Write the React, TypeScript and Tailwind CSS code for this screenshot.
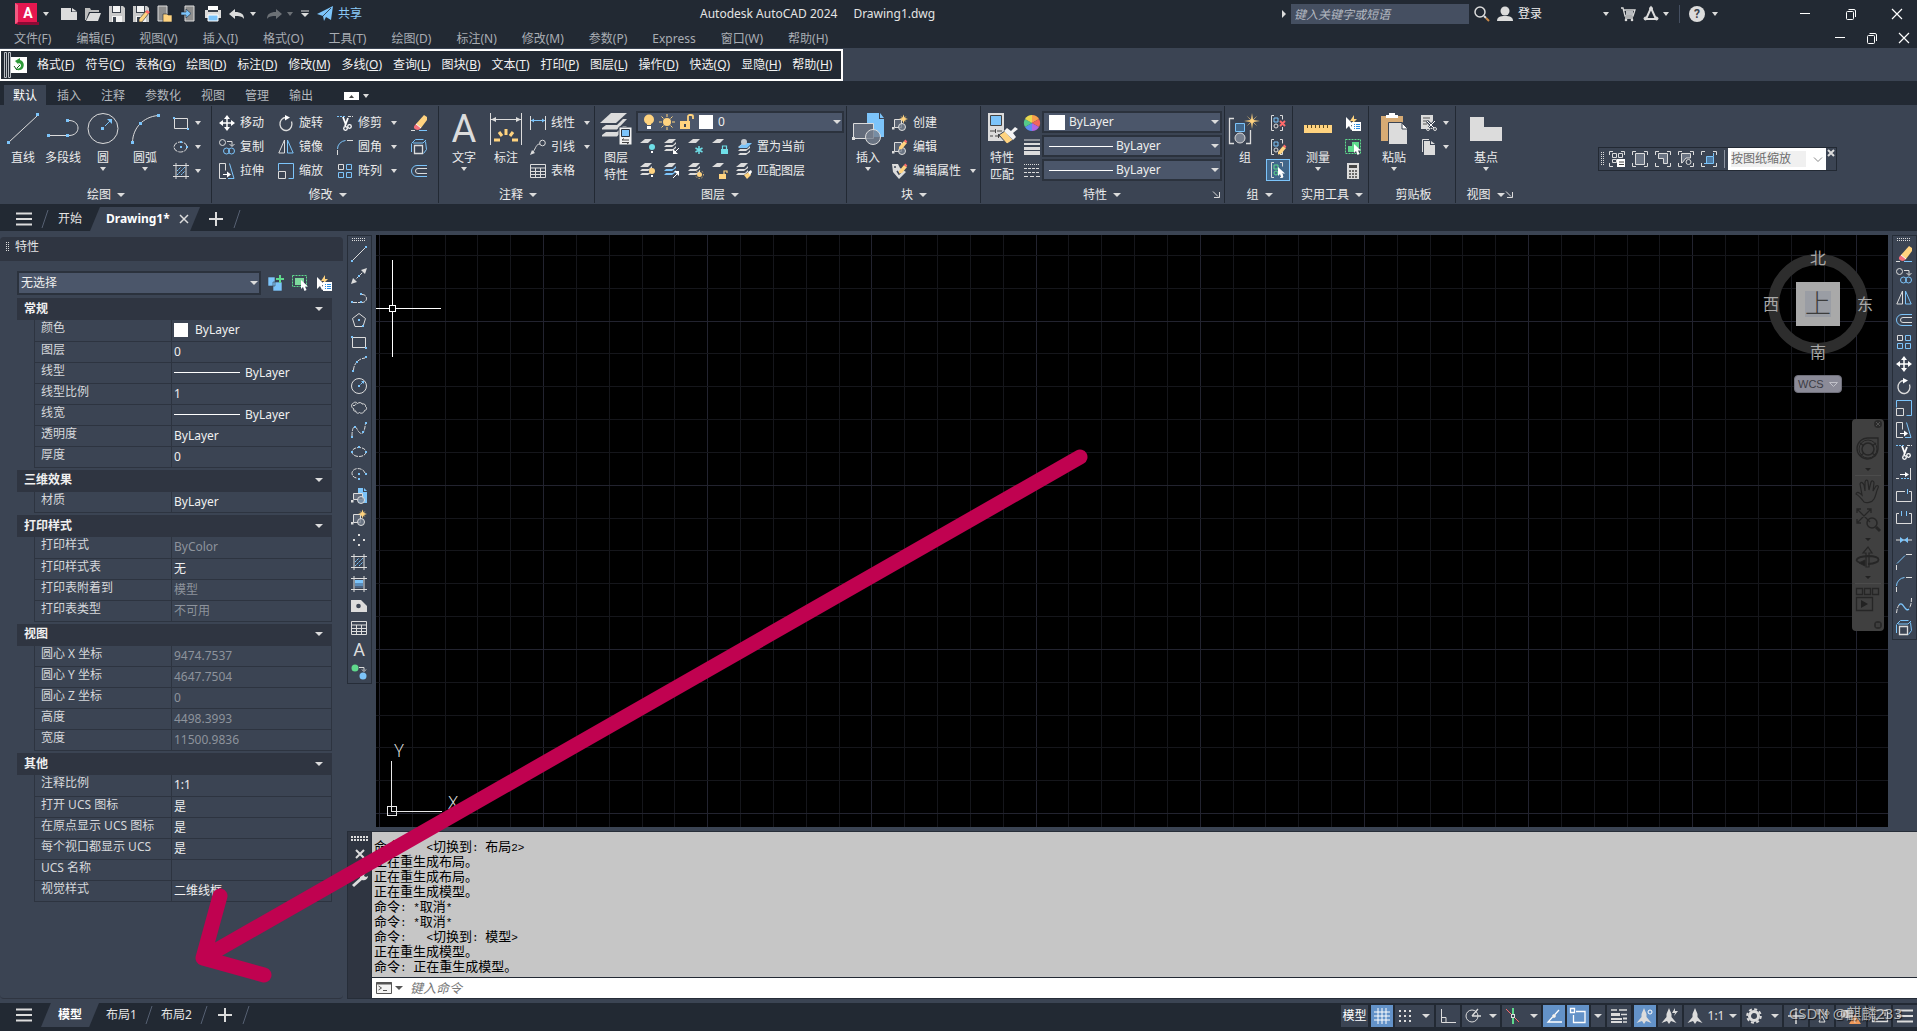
import React from "react";

const W = "#dcdcdc";
const B = "#7cc4fa";
const Y = "#ffd37f";
const T = "#6fdfe8";
const R = "#ff6b6b";
const G = "#5fd98c";
const P = "#3b4453";

type Kids = { children?: React.ReactNode };

function S({ w = 16, h, vb, children }: { w?: number; h?: number; vb?: string } & Kids) {
  const hh = h ?? w;
  return (
    <svg width={w} height={hh} viewBox={vb ?? `0 0 ${w} ${hh}`} fill="none" stroke={W} className="block shrink-0 overflow-visible" aria-hidden="true">
      {children}
    </svg>
  );
}

/* Blue grip marker used on most drawing icons. */
function D({ x, y, s = 2 }: { x: number; y: number; s?: number }) {
  return <rect x={x} y={y} width={s} height={s} fill={B} stroke="none" />;
}

function Arrow() {
  return <S w={6} h={4}><path d="M0 0h6L3 4z" fill={W} stroke="none" /></S>;
}
function BigArrow() {
  return <S w={8} h={4}><path d="M0 0h8L4 4z" fill={W} stroke="none" /></S>;
}

/* Stack of layer sheets; every layer tool adds its own badge to it. */
function Sheets({ n, blue }: { n: number; blue?: boolean }) {
  return (
    <g stroke="none" fill={W}>
      <path d="M5 0h7l-4 4H0z" />
      {n > 1 && <path d="M0 8l2-2h7l3-3v2L8 8z" fill={blue ? B : W} />}
      {n > 2 && <path d="M0 12l2-2h7l3-3v2l-4 3z" fill={blue ? B : W} />}
    </g>
  );
}

const Pencil = () => (
  <g stroke="none">
    <path d="M8 13l5-6 3 2-5 6-3 .6z" fill={Y} />
    <path d="M13 7l1.300-1.600 2 2L15 9z" fill={R} />
  </g>
);
const Star = ({ x, y, r = 4.5 }: { x: number; y: number; r?: number }) => (
  <path
    d={`M${x} ${y - r}L${x + 1} ${y - 1.5}L${x + r * 0.7} ${y - r * 0.7}L${x + 1.5} ${y - 1}L${x + r} ${y}L${x + 1.5} ${y + 1}L${x + r * 0.7} ${y + r * 0.7}L${x + 1} ${y + 1.5}L${x} ${y + r}L${x - 1} ${y + 1.5}L${x - r * 0.7} ${y + r * 0.7}L${x - 1.5} ${y + 1}L${x - r} ${y}L${x - 1.5} ${y - 1}L${x - r * 0.7} ${y - r * 0.7}L${x - 1} ${y - 1.5}z`}
    fill={Y}
    stroke="none"
  />
);
const Cursor = ({ x, y }: { x: number; y: number }) => (
  <path d={`M${x} ${y}v9l2-2 1.500 4 2-1-1.500-3.500h3z`} fill="#fff" stroke="none" />
);

const ic = {
  line: <S><path d="M2 14L14 2" /><D x={0} y={14} /><D x={14} y={0} /></S>,
  xline: <S><path d="M2 14L14 2" strokeDasharray="3 2" /><path d="M0 16l2-6 4 4zM16 0l-6 2 4 4z" fill={W} stroke="none" /><D x={7} y={7} /></S>,
  pline: <S><path d="M2 12.500h7M11 4.500c6 0 6 8 0 8" strokeDasharray="4 1" /><D x={0} y={11} /><D x={9} y={11} /><D x={9} y={3} /></S>,
  polygon: <S><path d="M8 1.500l6.500 5-2.500 8H4l-2.500-8z" /><D x={7} y={7} /><D x={11} y={13} /></S>,
  rect: <S><path d="M1.500 3.500h13v10h-13z" /><D x={0} y={2} /><D x={14} y={13} /></S>,
  arc: <S><path d="M2.500 14C3 7 8 2.500 14 2" strokeDasharray="4 1" /><D x={1} y={14} /><D x={5} y={5} /><D x={14} y={0} /></S>,
  circle: <S><circle cx="8" cy="8" r="7.500" /><D x={7} y={7} /><path d="M9.500 6.500l2.500-2.500" stroke={B} /><path d="M10 3h3v3z" fill={B} stroke="none" /></S>,
  cloud: <S><path d="M3 9C0 8 0 4 2 3.500c1-2 4-1.500 4.500 0C8 2 11 2.500 11 4c2-.5 4 .5 3.500 2.500 2 1 1 4-1 4C13 13 10 14 8.500 12.500 7 14 4.500 13 5 11 3 11.500 2 10.500 3 9zM2 5.500c1.500.500 3-.5 3-2" /></S>,
  spline: <S><path d="M1 14C1 4 4 3 6 7s7 10 8.500-6" strokeDasharray="4 1" /><D x={0} y={14} /><D x={3} y={4} /><D x={11} y={9} /><D x={14} y={0} /></S>,
  ellipse: <S><ellipse cx="8" cy="8" rx="7" ry="4.500" strokeDasharray="4 1" /><D x={0} y={7} /><D x={14} y={7} /><D x={7} y={2} /></S>,
  ellipseC: <S><ellipse cx="7.500" cy="8" rx="6.500" ry="5" strokeDasharray="5 1" /><D x={7} y={7} /><D x={13} y={7} /><D x={7} y={2} /></S>,
  earc: <S><path d="M14 7C12 1 1 1 1 7.500c0 3 3 4.500 5 4.500" strokeDasharray="4 1" /><D x={14} y={7} /><D x={7} y={7} /><D x={7} y={12} /></S>,
  insertS: <S><path d="M7 0h5v4h4v11H7z" fill={B} stroke="none" /><path d="M13 0l3 3h-3z" fill={B} stroke="none" /><path d="M2.500 5.500h9v6h-9z" fill="#636b7a" /><circle cx="10" cy="12" r="3.500" fill="#767f8ecc" /><rect x="0" y="12" width="2.500" height="2.500" fill={W} stroke="none" /></S>,
  create: <S><path d="M2.500 4.500h7v8h-7z" fill="#5a6372" /><circle cx="10" cy="12" r="3.500" fill="#767f8ecc" /><rect x="0" y="12" width="2.500" height="2.500" fill={W} stroke="none" /><Star x={11.5} y={4} /></S>,
  editB: <S><path d="M2.500 3.500h7v9h-7z" fill="#5a6372" /><circle cx="10" cy="12" r="3.500" fill="#767f8ecc" /><rect x="0" y="12" width="2.500" height="2.500" fill={W} stroke="none" /><g transform="translate(-1,-5)"><Pencil /></g></S>,
  editAttr: <S><path d="M0 1h6l2 4 6 4-7 7-6-7z" fill={W} stroke="none" /><circle cx="3" cy="4" r="1" fill={P} stroke="none" /><path d="M5 8l2 3 4-4" stroke={P} strokeWidth="1.500" /><g transform="translate(-1,-5)"><Pencil /></g></S>,
  point: <S><g fill={W} stroke="none"><path d="M7 2h2v2H7zM2 7h2v2H2zM12 7h2v2h-2zM7 12h2v2H7z" /></g></S>,
  hatch: <S><path d="M3 0v16M13 0v16M0 2.500h16M0 13.500h16" /><path d="M4 8l4-4M4 12l8-8M8 12l4-4" stroke={B} strokeDasharray="2 .5" /></S>,
  gradient: <S><path d="M3 0v16M13 0v16M0 2.500h16M0 13.500h16" /><path d="M4 4h8v3H4z" fill={B} stroke="none" /><path d="M4 7h8v3H4z" fill="#5b8dba" stroke="none" /><path d="M4 10h8v2H4z" fill="#4a6280" stroke="none" /></S>,
  region: <S><path d="M0 2h10l6 6v6H0z" fill={W} stroke="none" /><circle cx="7.500" cy="8" r="2.300" fill={P} stroke="none" /></S>,
  table: <S><path d="M.5 1.500h15v13H.5zM.5 5h15M.5 8.500h15M.5 11.500h15M5.500 5v9M10.500 5v9" /></S>,
  text: <S><text x="8" y="14" textAnchor="middle" fontSize="18" fontFamily="Roboto" fill={W} stroke="none">A</text></S>,
  addsel: <S><circle cx="4" cy="4" r="3.500" fill={G} stroke="none" /><circle cx="12" cy="12" r="3.500" fill={B} stroke="none" /><path d="M8 3.500h5V6M11 5.500l2 2 2-2" /></S>,
  erase: <S><path d="M5 9L13 0l3 2v3l-6 8z" fill={Y} stroke="none" /><path d="M5 9l5 4c-2 3-6 2-7 0-.5-2 1-3 2-4z" fill="#f4707a" stroke="none" /><path d="M5 9l5 4" stroke="#fff" /><path d="M0 15.500h4" /><path d="M8 15.500h8" stroke={B} /></S>,
  copy: <S><circle cx="3.500" cy="3.500" r="3" /><path d="M8 2.500h5V7M10.500 5l2.500 2.500L15.500 5" /><circle cx="7.500" cy="12" r="3" stroke={B} /><circle cx="12.500" cy="12" r="3" stroke={B} /></S>,
  mirror: <S><path d="M6.500 1v13H.8z" /><path d="M9.500 1v13h5.700z" stroke={B} /></S>,
  offset: <S><path d="M16 2.500H6a5.500 5.500 0 000 11h10" stroke={B} /><path d="M16 5.500H7a2.500 2.500 0 000 5h9" /></S>,
  array: <S><path d="M1.500 1.500h5v5h-5z" /><path d="M9.500 1.500h5v5h-5zM1.500 9.500h5v5h-5zM9.500 9.500h5v5h-5z" stroke={B} /></S>,
  move: <S><path d="M8 2v12M2 8h12" stroke="#fff" strokeWidth="1.500" /><path d="M8 0l3 4H5zM8 16l3-4H5zM0 8l4-3v6zM16 8l-4-3v6z" fill="#fff" stroke="none" /></S>,
  rotate: <S><path d="M8 2.500a6 6.500 0 105.500 4" strokeWidth="1.300" /><path d="M7 0l5 2.500L7 5.500z" fill="#fff" stroke="none" /></S>,
  scale: <S><path d="M.5 7.500V.5h15v15h-5" stroke={B} /><path d="M.5 8.500h7v7h-7z" /></S>,
  stretch: <S><path d="M7 15.500H.5V.5h6v7" /><path d="M10.500.5l4.500 15H9" stroke={B} /><path d="M4 11.500h5" stroke="#fff" /><path d="M8 8.500l4 3-4 3z" fill="#fff" stroke="none" /></S>,
  trim: <S><path d="M0 1.500h9" stroke={B} strokeDasharray="2 1" /><path d="M11 1.500h5" strokeDasharray="3 1" /><path d="M6 2l3 8M11 3L8 11" stroke="#fff" strokeWidth="1.800" /><circle cx="8.500" cy="13.500" r="1.800" stroke="#fff" strokeWidth="1.300" /><circle cx="12.500" cy="11.500" r="1.800" stroke="#fff" strokeWidth="1.300" /></S>,
  extend: <S><path d="M14.500 2v12" /><path d="M0 12.500h3" /><path d="M5 12.500h8" stroke={B} strokeDasharray="2 1" /><path d="M4 8.500h6" stroke="#fff" /><path d="M9 6l4 2.500L9 11z" fill="#fff" stroke="none" /></S>,
  breakPt: <S><path d="M9 3.500H.5v10h15v-10H13" /><path d="M11.500 1v5" stroke={B} /></S>,
  brk: <S><path d="M3 3.500H.5v10h15v-10H13" /><path d="M5.500 1v5M10.500 1v5" stroke={B} /></S>,
  join: <S><path d="M0 8h16" /><path d="M4 5l4 3-4 3zM12 5L8 8l4 3z" fill={B} stroke="none" /></S>,
  chamfer: <S><path d="M.5 16v-5M10 .5h6" /><path d="M1 9.500L9 1.500" stroke={B} /></S>,
  fillet: <S><path d="M.5 16v-5M10 1.500h6" /><path d="M.5 10a9 8.500 0 018-8.500" stroke={B} /></S>,
  blend: <S><path d="M.5 15C1 12 1 10 3 7M15.500 0c0 4-.5 7-2 10" strokeDasharray="4 1" /><path d="M3 7c4-5 6 8 10 4" stroke={B} strokeWidth="1.300" /></S>,
  explode: <S><path d="M3.500 6.500h8v8h-8z" strokeWidth="1.300" /><path d="M.5 4.500l4-4h8M14.500 2.500l1 8-3 4M.5 5v8M2 4h10l3-3" stroke={B} /></S>,
  dimlin: <S><path d="M.5 1v14M15.500 1v14" /><path d="M1 5.500h14" stroke={B} /><path d="M1 5.500l3-2v4zM15 5.500l-3-2v4z" fill={B} stroke="none" /></S>,
  leader: <S><circle cx="12.500" cy="4" r="2.800" /><path d="M10 5C6 5 6 9 3 13" /><path d="M0 16l2-5 3 3z" fill={W} stroke="none" /></S>,
};

const bulb = (x: number, y: number, c: string) => (
  <g stroke="none"><circle cx={x} cy={y} r="3" fill={c} /><path d={`M${x - 1} ${y + 4}h2v2h-2z`} fill="#fff" /></g>
);
const lock = (x: number, y: number, c: string, open?: boolean) => (
  <g><path d={`M${x} ${y}h7v5h-7z`} fill={c} stroke="none" /><path d={open ? `M${x + 5} ${y}v-3h3v2` : `M${x + 1.5} ${y}v-3h4v3`} stroke={c} strokeWidth="1.200" /></g>
);
const layerOff = <S><Sheets n={1} />{bulb(12, 8, T)}</S>;
const layerIso = <S><Sheets n={3} /><path d="M15 9l-4 4" stroke="#fff" /><path d="M9 15v-5l5 5z" fill="#fff" stroke="none" /></S>;
const layerFrz = <S><Sheets n={1} /><path d="M11 7v8M7.500 9l7 4M14.500 9l-7 4" stroke={T} strokeWidth="1.500" /></S>;
const layerLock = <S><Sheets n={1} />{lock(9, 10, T)}</S>;
const layerCur = <S><g transform="translate(2,4)"><Sheets n={3} /></g><path d="M7 4h9l-5 5H2z" fill={B} stroke="none" /><circle cx="8" cy="3" r="3" fill="#c4c8ce" stroke="none" /></S>;
const layerOn = <S><Sheets n={3} />{bulb(12, 8, Y)}</S>;
const layerUniso = <S><Sheets n={3} blue /><path d="M9 15l4-4" stroke="#fff" /><path d="M15 8v5l-5-5z" fill="#fff" stroke="none" /></S>;
const layerThaw = <S><Sheets n={3} /><circle cx="11.500" cy="11.500" r="2.500" fill={Y} stroke="none" /><circle cx="11.500" cy="11.500" r="4" stroke={Y} strokeDasharray="1 2" /></S>;
const layerUnlock = <S><Sheets n={1} />{lock(7, 11, Y, true)}</S>;
const layerMatch = <S><Sheets n={3} /><path d="M8 12l5-3 2 3-4 4z" fill={Y} stroke="none" /><path d="M12 9l3-2 1 2-2 3z" fill="#fff" stroke="none" /></S>;

const quickSel = <S><path d="M1 2v12l3-3 2 4 2-1-2-4h3z" fill="#fff" stroke="none" /><path d="M9 0L5 6h3l-1 3 5-5H9z" fill={Y} stroke="none" /><path d="M7 7h9v9H7z" fill="#fff" stroke="none" /><path d="M9 9.500h1M11 9.500h4M9 11.500h1M11 11.500h4M9 13.500h1M11 13.500h4" stroke="#2c8de0" /></S>;
const selObj = <S><path d="M.5 .5h14v11H.5z" stroke={G} strokeDasharray="2 1" /><path d="M3 3h9v7H3z" fill="#7ed89d" stroke="none" /><Cursor x={9} y={5} /></S>;
const selAll = <S><path d="M.5 .5h15v14H.5z" stroke={G} strokeDasharray="2 1" /><path d="M3 7h4V3h7v6H9v4H3z" fill={G} stroke="none" /><Cursor x={9} y={5} /></S>;
const pickAdd = <S><path d="M0 2h7v9H0zM5 7h9v9H5z" fill={B} stroke={P} strokeWidth=".6" /><path d="M12 0v8M8 4h8" stroke={G} strokeWidth="2" /></S>;

function Item({ icon, label, arrow, cls = "" }: { icon: React.ReactNode; label?: string; arrow?: boolean; cls?: string }) {
  return (
    <button type="button" className={`flex h-6 items-center gap-[5px] whitespace-nowrap ${cls}`} aria-label={label ?? "工具"}>
      {icon}
      {label && <span>{label}</span>}
      {arrow && <span className={label ? "ml-[4px]" : "ml-px"}><Arrow /></span>}
    </button>
  );
}

function Big({ icon, label, label2, arrow, cls }: { icon: React.ReactNode; label: string; label2?: string; arrow?: boolean; cls: string }) {
  return (
    <button type="button" className={`flex flex-col items-center pt-[2px] leading-[17px] ${cls}`}>
      {icon}
      <span className="mt-[4px]">{label}</span>
      {label2 && <span>{label2}</span>}
      {arrow && <span className="mt-px"><Arrow /></span>}
    </button>
  );
}

function Panel({ title, cls, noArrow, launcher, children }: { title: string; cls: string; noArrow?: boolean; launcher?: boolean } & Kids) {
  return (
    <section className={`my-px flex shrink-0 flex-col border-[#222933] pt-[5px] ${cls}`}>
      <div className="flex h-[72px]">{children}</div>
      <div className="flex h-[20px] items-center pt-[3px]">
        <span className="flex-1" />
        <button type="button" className="flex items-center gap-[6px]">{title}{!noArrow && <BigArrow />}</button>
        <span className="flex flex-1 justify-end pr-[2px]">
          {launcher && <S w={7} h={7}><path d="M0 .5l5 5M6.500 1v5.500H1" /></S>}
        </span>
      </div>
    </section>
  );
}

function Combo({ label, value, pre, cls }: { label: string; value: string; pre?: React.ReactNode; cls: string }) {
  return (
    <div className={`flex items-center border-2 border-[#2b323d] bg-[#4b566a] pr-px ${cls}`}>
      {pre}
      <select aria-label={label} className="h-full min-w-0 flex-1 appearance-none bg-transparent text-[#eee] outline-none">
        <option>{value}</option>
      </select>
      <span className="pointer-events-none"><BigArrow /></span>
    </div>
  );
}

const menus = ["文件(F)", "编辑(E)", "视图(V)", "插入(I)", "格式(O)", "工具(T)", "绘图(D)", "标注(N)", "修改(M)", "参数(P)", "Express", "窗口(W)", "帮助(H)"];
const plug = ["格式F", "符号C", "表格G", "绘图D", "标注D", "修改M", "多线O", "查询L", "图块B", "文本T", "打印P", "图层L", "操作D", "快选Q", "显隐H", "帮助H"];

const Min = () => <S w={10} h={12}><path d="M0 5.500h10" stroke="#fff" /></S>;
const Restore = () => <S w={10} h={12}><rect x=".5" y="3.500" width="7" height="8" rx="1" stroke="#fff" /><path d="M2.500 1.500h5.500a1.500 1.500 0 011.500 1.500v6" stroke="#fff" /></S>;
const Close = () => <S w={10} h={12}><path d="M0 1l10 10M10 1L0 11" stroke="#fff" strokeWidth="1.200" /></S>;

function WinButtons({ cls }: { cls: string }) {
  return (
    <div className={`flex items-center ${cls}`}>
      <button type="button" aria-label="最小化"><Min /></button>
      <button type="button" aria-label="还原"><Restore /></button>
      <button type="button" aria-label="关闭"><Close /></button>
    </div>
  );
}

const floppy = (
  <g stroke="none"><path d="M0 0h14l2 2v14H0z" fill="#c9c9c9" /><path d="M3 0h9v7H3z" fill="#3a414c" /><path d="M4 0h7v6H4z" fill="#f4f4f4" /><path d="M3 10h10v6H3z" fill="#f4f4f4" /><path d="M4 11h3v5H4z" fill="#3a414c" /></g>
);
const quick: [string, React.ReactNode][] = [
  ["新建", <S><path d="M0 2h10v4h6v8H0zM11 2l5 3.500h-5z" fill={W} stroke="none" /></S>],
  ["打开", <S><path d="M0 14V2h5l1 2h8v2H4L1 14z" fill="#bdbdbd" stroke="none" /><path d="M5 7h11l-3 8H1z" fill={W} stroke="none" /></S>],
  ["保存", <S>{floppy}</S>],
  ["另存为", <S>{floppy}<path d="M6 13l7-8 3 2-7 9H6z" fill={Y} stroke="#222933" strokeWidth=".6" /><path d="M12 6l2-2 3 2-2 2z" fill={R} stroke="none" /></S>],
  ["从移动设备打开", <S><path d="M1 0h9v15H1z" fill="#8d8d8d" stroke={W} /><path d="M6 8h4l1 1h4v7H6z" fill={Y} stroke="#222933" strokeWidth=".6" /></S>],
  ["保存到移动设备", <S><path d="M4 0h9v15H4z" fill="#8d8d8d" stroke={W} /><path d="M0 6h5V3l5 4.500L5 12V9H0z" fill={B} stroke="#222933" strokeWidth=".6" /></S>],
  ["打印", <S><path d="M3 0h10v5H3z" fill="#fff" stroke="none" /><path d="M0 4h16v8H0z" fill={W} stroke="none" /><path d="M3 4h10v2H3z" fill="#3a414c" stroke="none" /><path d="M3 9h10v6H3z" fill={B} stroke="#fff" /></S>],
];

function TitleBar() {
  return (
    <header className="flex h-[28px] shrink-0 items-center pl-[15px]">
      <div className="flex w-[685px] shrink-0 items-center">
        <button type="button" aria-label="应用程序菜单" className="mr-[4px] flex items-center gap-[4px]">
          <S w={24} h={22}>
            <path d="M0 0h22v21H0z" fill="#e5174f" stroke="none" /><path d="M0 0l3 2v17l-3 2z" fill="#f25a82" stroke="none" /><path d="M3 19h21v3H2z" fill="#8c0a35" stroke="none" />
            <text x="13" y="15" textAnchor="middle" fontSize="14" fontWeight="700" fontFamily="Roboto" fill="#fff" stroke="none">A</text>
          </S>
          <Arrow />
        </button>
        <div className="ml-2 flex gap-2">
          {quick.map(([l, i]) => <button type="button" key={l} aria-label={l}>{i}</button>)}
          <button type="button" aria-label="放弃" className="flex items-center gap-[5px]"><S><path d="M0 8l6-5v3c6 0 9 2 9 7-2-3-5-3-9-3v3z" fill={W} stroke="none" /></S><Arrow /></button>
          <button type="button" aria-label="重做" className="ml-[2px] flex items-center gap-[5px] opacity-40"><S><path d="M16 8l-6-5v3C4 6 1 8 1 13c2-3 5-3 9-3v3z" fill={W} stroke="none" /></S><Arrow /></button>
          <button type="button" aria-label="自定义快速访问"><S w={8} h={8}><path d="M0 1h8" /><path d="M0 3h8L4 7z" fill={W} stroke="none" /></S></button>
          <button type="button" className="flex items-center gap-[5px] text-[#8ccbf8]"><S><path d="M0 8L16 0l-2 14-5-3-2 4-1-5z" fill={B} stroke="none" /><path d="M6 10L14 2" stroke="#222933" strokeWidth=".8" /></S>共享</button>
        </div>
      </div>
      <h1 className="flex shrink-0 gap-4 text-[#e4e4e4]"><span>Autodesk AutoCAD 2024</span><span>Drawing1.dwg</span></h1>
      <div className="flex flex-1 items-center justify-end pr-[15px]">
        <S w={4} h={8}><path d="M0 0l4 4-4 4z" fill={W} stroke="none" /></S>
        <input aria-label="搜索" placeholder="键入关键字或短语" className="ml-[5px] h-[20px] w-[178px] bg-[#454f61] px-[3px] italic placeholder:text-[#b4b9c1]" />
        <button type="button" aria-label="搜索" className="ml-[5px]"><S><circle cx="6" cy="6" r="5" strokeWidth="1.500" /><path d="M10 10l2 2" strokeWidth="2" /><path d="M12 12l3 3" stroke="#c98a4a" strokeWidth="2" /></S></button>
        <button type="button" className="ml-[7px] flex items-center gap-[5px] text-[#eee]"><S><circle cx="8" cy="5" r="4.500" fill={W} stroke="none" /><path d="M0 15c0-4 3-5 8-5s8 1 8 5z" fill={W} stroke="none" /></S>登录</button>
        <span className="ml-[61px]"><Arrow /></span>
        <button type="button" aria-label="购物车" className="ml-[12px]"><S w={14} h={16}><path d="M0 2h2l2 8h8l2-6H3M4 12h8" strokeWidth="1.300" /><path d="M5 5h7v4H5z" fill="#b9bcc0" stroke="none" /><circle cx="5" cy="14" r="1.300" fill={W} stroke="none" /><circle cx="11" cy="14" r="1.300" fill={W} stroke="none" /></S></button>
        <button type="button" aria-label="Autodesk App" className="ml-[8px] flex items-center gap-[4px]"><S><path d="M8 2L3 13h10z" strokeWidth="2" /><circle cx="8" cy="2.500" r="1.500" fill={W} /><circle cx="2.500" cy="12.500" r="1.500" fill={W} /><circle cx="13.500" cy="12.500" r="1.500" fill={W} /></S><Arrow /></button>
        <span className="ml-[10px] h-[18px] w-px bg-[#454f61]" />
        <button type="button" aria-label="帮助" className="ml-[9px] flex items-center gap-[7px]"><S><circle cx="8" cy="8" r="8" fill={W} stroke="none" /><text x="8" y="12" textAnchor="middle" fontSize="12" fontWeight="700" fontFamily="Roboto" fill="#3a414c" stroke="none">?</text></S><Arrow /></button>
        <WinButtons cls="ml-[82px] gap-[36px]" />
      </div>
    </header>
  );
}

const bulbOn = <S w={12} h={16}><circle cx="6" cy="5.500" r="5" fill={Y} stroke="none" /><path d="M4 10h4v1H4z" fill={Y} stroke="none" /><path d="M4 12h4v3H4z" fill="#fff" stroke="none" /></S>;
const sunOn = <S><circle cx="8" cy="8" r="4" fill={Y} stroke="none" /><path d="M8 0v3M8 13v3M0 8h3M13 8h3M2.500 2.500l2 2M11.500 11.500l2 2M13.500 2.500l-2 2M4.500 11.500l-2 2" stroke={Y} /></S>;
const lockOpen = <S><path d="M1 7h10v8H1z" fill={Y} stroke="none" /><path d="M9 7V2.500Q9 1 11 1h1q2 0 2 1.500V5" stroke={Y} strokeWidth="1.800" /><path d="M5 10h2v3H5z" fill={P} stroke="none" /></S>;
const longLine = <span className="mr-[3px] h-px w-[64px] shrink-0 bg-white" />;
const groupSm = (extra: React.ReactNode, c = B) => (
  <S><path d="M4 .5H1.500v15H4M10 .5h2.500v4M12.500 12v3.500H10" /><path d="M4 3h4v4H4z" stroke={c} /><circle cx="6" cy="11" r="2" stroke={c === B ? W : c} />{extra}</S>
);

function Ribbon() {
  return (
    <div className="flex h-[99px] shrink-0 overflow-hidden bg-[#3b4453] text-[#ececec]">
      <Panel title="绘图" cls="w-[212px] border-r pl-[3px]">
        <Big cls="w-[40px]" label="直线" icon={<S w={32}><path d="M2 29L30 3" /><D x={0} y={28} s={3} /><D x={29} y={0} s={3} /></S>} />
        <Big cls="w-[40px]" label="多段线" icon={<S w={32}><path d="M1 22.500h20M22 7.500c12 0 12 15 0 15" /><D x={0} y={21} s={3} /><D x={19} y={21} s={3} /><D x={19} y={6} s={3} /></S>} />
        <Big cls="w-[40px]" label="圆" arrow icon={<S w={32}><circle cx="16" cy="15.500" r="15" /><D x={14} y={14} s={3} /><path d="M18 13l5-5" stroke={B} /><path d="M20 6h5v5z" fill={B} stroke="none" /></S>} />
        <Big cls="w-[44px]" label="圆弧" arrow icon={<S w={32}><path d="M3.500 29C4 15 14 4 29 2.500" /><D x={2} y={28} s={3} /><D x={10} y={9} s={3} /><D x={28} y={1} s={3} /></S>} />
        <div className="ml-[6px]">
          <Item icon={ic.rect} arrow /><Item icon={ic.ellipseC} arrow /><Item icon={ic.hatch} arrow />
        </div>
      </Panel>
      <Panel title="修改" cls="w-[227px] border-r pl-[7px]">
        <div className="w-[59px]"><Item icon={ic.move} label="移动" /><Item icon={ic.copy} label="复制" /><Item icon={ic.stretch} label="拉伸" /></div>
        <div className="w-[59px]"><Item icon={ic.rotate} label="旋转" /><Item icon={ic.mirror} label="镜像" /><Item icon={ic.scale} label="缩放" /></div>
        <div className="w-[74px]"><Item icon={ic.trim} label="修剪" arrow /><Item icon={ic.fillet} label="圆角" arrow /><Item icon={ic.array} label="阵列" arrow /></div>
        <div><Item icon={ic.erase} /><Item icon={ic.explode} /><Item icon={ic.offset} /></div>
      </Panel>
      <Panel title="注释" cls="w-[156px] border-r pl-[5px]">
        <Big cls="w-[40px]" label="文字" arrow icon={<S w={32}><text x="16" y="29" textAnchor="middle" fontSize="38" fontFamily="Roboto" fill={W} stroke="none">A</text></S>} />
        <Big cls="w-[44px]" label="标注" icon={<S w={32}><path d="M.5 0v32M31.500 0v32M1 6.500h30" /><path d="M1 6.500l5-2.500v5zM31 6.500l-5-2.500v5z" fill={W} stroke="none" /><path d="M16 16v6M9 19l3 4M23 19l-3 4M4 27h6M28 27h-6" stroke={Y} strokeWidth="3" /></S>} />
        <div className="ml-[2px]"><Item icon={ic.dimlin} label="线性" arrow /><Item icon={ic.leader} label="引线" arrow /><Item icon={ic.table} label="表格" /></div>
      </Panel>
      <Panel title="图层" cls="w-[252px] border-r pl-[3px] pr-[2px]">
        <Big cls="w-[36px]" label="图层" label2="特性" icon={<S w={32}><g fill={W} stroke="none"><path d="M11 0h16L16 10H0z" /><path d="M2 15l4-3h11l6-6h4L17 16.500H2zM2 22l4-3h11l6-6h4L17 23.500H2z" /></g><path d="M19 14h13v18H19z" fill="#f1f1f1" stroke={P} /><path d="M21.500 16.500h8v7h-8z" fill={B} stroke="#2b323d" /><path d="M22 27h7M22 29.500h7M24 25.500l-2 1.500M27 31l2-1.500" stroke="#444" /></S>} />
        <div className="min-w-0 flex-1 pl-[2px]">
          <Combo label="图层" value="0" cls="h-[22px] pl-[5px]" pre={<span className="mr-[5px] flex items-center gap-[4px]">{bulbOn}{sunOn}{lockOpen}<span className="h-[14px] w-[14px] bg-white" /></span>} />
          <div className="mt-[2px] flex gap-2 pl-[4px]">{[layerOff, layerIso, layerFrz, layerLock].map((x, i) => <Item key={i} icon={x} />)}<Item icon={layerCur} label="置为当前" /></div>
          <div className="flex gap-2 pl-[4px]">{[layerOn, layerUniso, layerThaw, layerUnlock].map((x, i) => <Item key={i} icon={x} />)}<Item icon={layerMatch} label="匹配图层" /></div>
        </div>
      </Panel>
      <Panel title="块" cls="w-[134px] border-r pl-[3px]">
        <Big cls="w-[36px]" label="插入" arrow icon={<S w={32}><path d="M15 0h12v6h5v18H15z" fill={B} stroke="none" /><path d="M28 0l4 5h-4z" fill={B} stroke="none" /><path d="M1.500 10.500h20v15h-20z" fill="#636b7a" /><circle cx="21" cy="24" r="7.500" fill="#767f8ecc" /><rect x="0" y="24" width="3" height="3" fill={W} stroke="none" /></S>} />
        <div className="ml-[6px]"><Item icon={ic.create} label="创建" /><Item icon={ic.editB} label="编辑" /><Item icon={ic.editAttr} label="编辑属性" arrow /></div>
      </Panel>
      <Panel title="特性" cls="w-[244px] border-r pl-[3px] pr-[2px]" launcher>
        <Big cls="w-[36px]" label="特性" label2="匹配" icon={<S w={32}><path d="M2 0h16v28H2z" fill={W} stroke="none" /><path d="M4.500 2.500h11v10h-11z" fill={B} stroke="#444" /><path d="M4 18h5M11 18h5M4 23h3M9 23h5M9.500 16v4M12.500 21v4" stroke="#444" /><path d="M13 22l8 9 6-4-8-9z" fill={Y} stroke="#3b4453" /><path d="M18 18l9 9 3-3-3-4 5-4-3-2-4 4-4-3z" fill="#f4f4f4" stroke="none" /></S>} />
        <div className="ml-[4px] w-[18px]">
          <Item icon={<S><g stroke="none"><path d="M8 8V0a8 8 0 017 4z" fill="#f7a04b" /><path d="M8 8l7-4a8 8 0 010 8z" fill="#f2655c" /><path d="M8 8l7 4a8 8 0 01-7 4z" fill="#b065e0" /><path d="M8 8v8a8 8 0 01-7-4z" fill="#5b8df0" /><path d="M8 8l-7 4a8 8 0 010-8z" fill="#54c98a" /><path d="M8 8L1 4a8 8 0 017-4z" fill="#e9d94f" /></g></S>} />
          <Item icon={<S><path d="M0 1h16" /><path d="M0 5h16" strokeWidth="2" /><path d="M0 9.500h16" strokeWidth="3" /><path d="M0 14h16" strokeWidth="4" /></S>} />
          <Item icon={<S><path d="M0 1.500h16" strokeDasharray="1 1" /><path d="M0 5.500h16M0 9.500h16" strokeDasharray="3 1" /><path d="M0 13.500h16" strokeDasharray="4 2" /></S>} />
        </div>
        <div className="flex min-w-0 flex-1 flex-col gap-[2px]">
          <Combo label="对象颜色" value="ByLayer" cls="h-[22px] pl-[5px]" pre={<span className="mr-[4px] h-[15px] w-[16px] bg-white" />} />
          <Combo label="线宽" value="ByLayer" cls="h-[22px] pl-[5px]" pre={longLine} />
          <Combo label="线型" value="ByLayer" cls="h-[22px] pl-[5px]" pre={longLine} />
        </div>
      </Panel>
      <Panel title="组" cls="w-[68px] border-r pl-[4px]">
        <Big cls="w-[32px]" label="组" icon={<S w={32}><path d="M5 5.500H.5v25H5M17 30.500h4.500V17" strokeWidth="1.300" /><path d="M6.500 10.500h9v8h-9z" fill="#42678a" stroke={B} /><circle cx="11" cy="25" r="5" fill="#767f8e" /><Star x={23} y={8} r={8} /></S>} />
        <div className="ml-[5px] flex flex-col">
          <Item cls="pl-[4px]" icon={groupSm(<path d="M10 6l5 5M15 6l-5 5" stroke={R} strokeWidth="2" />)} />
          <Item cls="pl-[4px]" icon={groupSm(<Pencil />)} />
          <button type="button" aria-label="组选择" aria-pressed="true" className="flex h-[22px] w-[24px] items-center justify-center border border-[#7cc4fa] bg-[#42678a]">{groupSm(<Cursor x={8} y={5} />, G)}</button>
        </div>
      </Panel>
      <Panel title="实用工具" cls="w-[76px] border-r pl-[5px]">
        <Big cls="w-[40px]" label="测量" arrow icon={<S w={32}><path d="M2 12h28v8H2z" fill={Y} stroke="none" /><path d="M5.500 12v3M9.500 12v3M13.500 12v3M17.500 12v3M21.500 12v3M25.500 12v3" stroke="#5b4a20" /></S>} />
        <div className="ml-[7px]">
          <Item icon={quickSel} /><Item icon={selAll} />
          <Item icon={<S><path d="M2 0h12v16H2z" fill={W} stroke="none" /><path d="M4 2h8v3H4z" fill="#444" stroke="none" /><path d="M4 8h2M7 8h2M10 8h2M4 11h2M7 11h2M10 11h2M4 14h2M7 14h2M10 14h2" stroke="#444" strokeWidth="1.500" /></S>} />
        </div>
      </Panel>
      <Panel title="剪贴板" noArrow cls="w-[87px] border-r pl-[5px]">
        <Big cls="w-[40px]" label="粘贴" arrow icon={<S w={32}><path d="M3 3h22v25H3z" fill="#d7ab74" stroke="none" /><path d="M8 2h3V0h6v2h3v3H8z" fill="#fff" stroke="none" /><path d="M10.500 9.500h14l5 5v17h-19z" fill={W} stroke={P} /><path d="M24 10v6h6z" fill="#fff" stroke={P} /></S>} />
        <div className="ml-[7px]">
          <Item arrow icon={<S><path d="M0 0h12v14H0z" fill={W} stroke="none" /><path d="M2 3h7M2 6h5M2 9h4" stroke="#555" /><path d="M6 6l8 8M14 6l-6 7" stroke={P} strokeWidth="3" /><path d="M6 6l7 7M14 6l-7 7" stroke="#fff" /><circle cx="7" cy="14" r="1.500" /><circle cx="14" cy="14" r="1.500" /></S>} />
          <Item arrow icon={<S><path d="M1.500 13V.5H8" /><path d="M3 2h6v4h5v10H3zM10 2l4 3h-4z" fill={W} stroke="none" /></S>} />
        </div>
      </Panel>
      <Panel title="视图" launcher cls="w-[59px] pl-[2px]">
        <Big cls="w-[56px]" label="基点" arrow icon={<S w={32}><path d="M0 4h14v10h18v14H0z" fill={W} stroke="none" /></S>} />
      </Panel>
      <div className="mt-[42px] ml-[83px] flex h-[24px] w-[239px] shrink-0 items-center border border-[#222933] pl-[2px]">
        <S w={4} h={14}><path d="M.5 0v14M2.500 0v14" strokeDasharray="1 1" /></S>
        <div className="ml-[4px] flex gap-[7px]">
          {[
            <g key="a"><path d="M3.500 2.500h4v4h-4zM9.500 2.500h4v4h-4zM3.500 8.500h4v3h-4z" /><path d="M8 8h8v8H8z" fill="#fff" stroke="none" /><path d="M10 11h5M10 13.500h5" stroke="#444" /></g>,
            <path key="b" d="M3.500 2.500h9v11h-9z" fill="#6a7382" />,
            <path key="c" d="M3.500 2.500h9v10h-4v-5h-5z" fill="#6a7382" />,
            <g key="d"><path d="M3.500 12V2.500h9V7H8l-4 5z" fill="#6a7382" /><circle cx="10.500" cy="11" r="2.500" /></g>,
            <path key="e" d="M5.500 5.500h7v7h-7zM3 12.500h3M12.500 5V2" fill="#4d7ba5" stroke={B} />,
          ].map((g, i) => (
            <button type="button" key={i} aria-label="视口"><S><path d="M4 .5H.5V4M12 .5h3.500V4M4 15.500H.5V12M12 15.500h3.500V12" />{g}</S></button>
          ))}
        </div>
        <span className="ml-[7px] h-[18px] w-px bg-[#8b93a0]" />
        <div className="ml-[3px] flex h-[22px] w-[98px] items-center bg-white pr-1 pl-[3px]">
          <select aria-label="视口比例" className="h-[16px] min-w-0 flex-1 appearance-none bg-[#f0f0f0] leading-4 text-[#6d6d6d]"><option>按图纸缩放</option></select>
          <span className="pointer-events-none ml-2"><S w={8} h={5}><path d="M0 .5l4 4 4-4" stroke="#888" /></S></span>
        </div>
        <button type="button" aria-label="关闭工具栏" className="ml-[2px] self-start pt-[2px]"><S w={6} h={6}><path d="M0 0l6 6M6 0L0 6" strokeWidth="2" /></S></button>
      </div>
    </div>
  );
}

const Plus = () => <S w={14} h={14}><path d="M7 0v14M0 7h14" strokeWidth="2" /></S>;
const Burger = ({ h = 14 }: { h?: number }) => <S w={16} h={h} vb="0 0 16 14"><path d="M0 1.500h16M0 7h16M0 12.500h16" strokeWidth="2" /></S>;
const Slash = () => <S w={8} h={18}><path d="M7 0L1 18" stroke="#566072" /></S>;

const groups: { t: string; rows: [string, string, string?][] }[] = [
  { t: "常规", rows: [["颜色", "ByLayer", "sw"], ["图层", "0"], ["线型", "ByLayer", "ln"], ["线型比例", "1"], ["线宽", "ByLayer", "ln"], ["透明度", "ByLayer"], ["厚度", "0"]] },
  { t: "三维效果", rows: [["材质", "ByLayer"]] },
  { t: "打印样式", rows: [["打印样式", "ByColor", "off"], ["打印样式表", "无"], ["打印表附着到", "模型", "off"], ["打印表类型", "不可用", "off"]] },
  { t: "视图", rows: [["圆心 X 坐标", "9474.7537", "off"], ["圆心 Y 坐标", "4647.7504", "off"], ["圆心 Z 坐标", "0", "off"], ["高度", "4498.3993", "off"], ["宽度", "11500.9836", "off"]] },
  { t: "其他", rows: [["注释比例", "1:1"], ["打开 UCS 图标", "是"], ["在原点显示 UCS 图标", "是"], ["每个视口都显示 UCS", "是"], ["UCS 名称", ""], ["视觉样式", "二维线框"]] },
];

function Palette() {
  return (
    <aside className="mr-[4px] flex w-[343px] shrink-0 flex-col rounded-b border-b border-[#2f3541]">
      <h2 className="mt-[2px] flex h-[24px] items-center gap-[6px] rounded-t bg-[#2f3541] pb-[5px] pl-[6px] text-[#e4e4e4]">
        <S w={3} h={10}><path d="M.5 0v10M2.500 0v10" strokeDasharray="1 1" /></S>特性
      </h2>
      <div className="mt-[10px] mr-[11px] ml-[17px]">
        <div className="flex items-center">
          <Combo label="选择" value="无选择" cls="mr-[7px] h-[24px] w-[244px] pl-[2px]" />
          <div className="flex gap-2">
            <button type="button" aria-label="切换 PICKADD">{pickAdd}</button>
            <button type="button" aria-label="选择对象">{selObj}</button>
            <button type="button" aria-label="快速选择">{quickSel}</button>
          </div>
        </div>
        <div className="mt-[3px] flex flex-col gap-[2px]">
          {groups.map((g) => (
            <section key={g.t}>
              <button type="button" className="flex h-[22px] w-full items-center justify-between bg-[#2f3541] pr-[9px] pb-px pl-[7px] font-bold text-[#f0f0f0]">{g.t}<BigArrow /></button>
              <table className="ml-[17px] w-[298px] table-fixed border-collapse">
                <tbody>
                  {g.rows.map(([k, v, m]) => (
                    <tr key={k} className="h-[21px]">
                      <th scope="row" className="w-[137px] border border-t-0 border-[#2d3440] p-0 pb-[4px] pl-[6px] text-left leading-4 font-normal whitespace-nowrap text-[#d6d8db]">{k}</th>
                      <td className={`border border-t-0 border-[#2d3440] p-0 pl-[2px] leading-4 ${m === "off" ? "text-[#8d939c]" : "text-[#f0f0f0]"}`}>
                        <span className="flex items-center">
                          {m === "sw" && <span className="mr-[7px] h-[14px] w-[14px] bg-white" />}
                          {m === "ln" && <span className="mr-[5px] h-px w-[66px] bg-white" />}
                          {v}
                        </span>
                      </td>
                    </tr>
                  ))}
                </tbody>
              </table>
            </section>
          ))}
        </div>
      </div>
    </aside>
  );
}

function ToolStrip({ icons, label }: { icons: React.ReactNode[]; label: string }) {
  return (
    <div role="toolbar" aria-label={label} className="flex w-[25px] shrink-0 flex-col items-center self-start border border-[#262d38] pt-[2px] pr-px">
      <S w={14} h={4}><path d="M0 .5h14M0 2.500h14" strokeDasharray="1 1" /></S>
      <div className="mt-px">
        {icons.map((i, n) => <button type="button" key={n} aria-label={`${label} ${n + 1}`} className="flex h-[22px] items-center">{i}</button>)}
      </div>
    </div>
  );
}

function Canvas() {
  const cols = Array.from({ length: 120 }, (_, i) => i);
  const rows = Array.from({ length: 70 }, (_, i) => i);
  return (
    <div className="relative min-w-0 flex-1 overflow-hidden bg-black">
      <svg width="100%" height="100%" className="absolute inset-0" fill="none" shapeRendering="crispEdges">
        {cols.map((i) => { const x = Math.round(3 + i * 32.83) + 0.5; return <path key={i} d={`M${x} 0V2400`} stroke={i % 5 ? "#15161b" : "#22232f"} />; })}
        {rows.map((i) => { const y = Math.round(20 + i * 32.83) + 0.5; return <path key={i} d={`M0 ${y}H4000`} stroke={i % 5 !== 2 ? "#15161b" : "#22232f"} />; })}
        <path d="M0 73.500H13M20 73.500H65M16.500 25V70M16.500 77V122M13.500 70.500h6v6h-6z" stroke="#fff" />
        <path d="M15.500 526V576.500H66M11.500 571.500h9v9h-9z" stroke="#e8e8e8" />
        <g fill="#e8e8e8" fontSize="18" fontFamily="Open Sans" fontWeight="300" textAnchor="middle">
          <text x="23" y="522">Y</text><text x="77" y="574">X</text>
        </g>
      </svg>
      <div className="absolute top-[15px] right-[14px] w-[112px]">
        <svg width="112" height="108" viewBox="0 0 112 108" className="block overflow-visible">
          <circle cx="56" cy="54" r="44.500" fill="none" stroke="#2d2d2d" strokeWidth="11" />
          <rect x="34" y="32" width="44" height="44" fill="#a9a9a9" /><rect x="43" y="41" width="26" height="26" fill="#9a9da4" />
          <g fill="#a8a8a8" fontFamily="Noto Sans CJK SC" fontSize="16" textAnchor="middle">
            <text x="56" y="14">北</text><text x="56" y="108">南</text><text x="9" y="60">西</text><text x="103" y="60">东</text>
            <text x="56" y="63" fontSize="26" fontWeight="300" fill="#3c3c3c">上</text>
          </g>
        </svg>
        <button type="button" className="mx-auto mt-[17px] flex h-[18px] w-[48px] items-center gap-[5px] rounded border border-[#6f6f7a] bg-[#8b8b98] pl-[3px] font-['Liberation_Sans',sans-serif] text-[11px] text-[#3c3c44]">WCS
          <S w={9} h={5}><path d="M.5 .5h8l-4 4z" stroke="#c0c0c8" /></S>
        </button>
      </div>
      <div className="absolute top-[184px] right-[4px] h-[212px] w-[32px] rounded bg-[#404040]">
        <svg width="32" height="212" viewBox="0 0 32 212" fill="none" stroke="#262626">
          <circle cx="26" cy="5" r="4" fill="#2a2a2a" stroke="none" /><path d="M24 3l4 4M28 3l-4 4" stroke="#505050" />
          <path d="M16 19h10v11a10.500 10.500 0 11-10-11zM8 24l4 3M24 24l-4 3M8 37l4-3M24 37l-4-3" strokeWidth="1.300" /><circle cx="16" cy="30" r="6" strokeWidth="1.500" /><circle cx="16" cy="30" r="9" />
          <path d="M13 49h6l-3 3zM13 119h6l-3 3zM13 157h6l-3 3z" fill="#222" stroke="none" />
          <path d="M3 56.500h26M3 164.500h26" stroke="#4c4c4c" />
          <path d="M12 83C9 79 6 76 4 75c1-3 4-1 6 1L8 65c1-3 3-1 4 1l1 6 0-9c1-3 3-2 3 0l1 8 2-8c1-2 3-1 3 1l-1 8 3-5c2-1 3 0 2 2-2 4-2 8-4 11-2 4-8 4-10 3z" strokeWidth="1.200" />
          <path d="M5 90l13 13M19 90L5 104M5 94v-4h4M15 90h4v4M5 100v4h4" strokeWidth="1.300" /><circle cx="20" cy="104" r="5" strokeWidth="1.500" /><path d="M24 108l4 4" strokeWidth="3" />
          <path d="M14 148v-14h-3l5-6 4 6h-3v14z" strokeWidth="1.200" /><path d="M10 144c-8-1-8-6 6-7 14 0 14 7 0 8" strokeWidth="1.800" /><path d="M7 144l6-3v6z" fill="#222" />
          <path d="M4.500 169.500h6v6h-6zM12.500 169.500h6v6h-6zM20.500 169.500h6v6h-6zM4.500 178.500h16v13h-16z" strokeWidth="1.300" /><path d="M9 181l7 4-7 4z" fill="#222" stroke="none" />
          <circle cx="26" cy="206" r="4" fill="#2a2a2a" stroke="none" /><path d="M24 205h4M24 207h4" stroke="#505050" />
        </svg>
      </div>
    </div>
  );
}

const log = ["命令:   <切换到: 布局2>", "正在重生成布局。", "正在重生成布局。", "正在重生成模型。", "命令: *取消*", "命令: *取消*", "命令:   <切换到: 模型>", "正在重生成模型。", "命令: 正在重生成模型。"];

function CommandLine() {
  return (
    <div className="mt-[4px] flex h-[168px] shrink-0 border border-r-0 border-[#262d38]">
      <div className="flex w-[23px] shrink-0 flex-col items-center bg-[#2f3541] pt-1">
        <S w={18} h={6}><path d="M0 1h18M0 4h18" strokeWidth="2" strokeDasharray="2 1" /></S>
        <button type="button" aria-label="关闭命令行" className="mt-[7px]"><S w={10} h={10}><path d="M1 1l8 8M9 1L1 9" strokeWidth="2" /></S></button>
        <button type="button" aria-label="自定义" className="mt-[13px]"><S><path d="M1 14L10 6" strokeWidth="3" /><path d="M8 6c0-3 2-5 5-5l-1 3 2 1 2-1c0 3-3 5-6 4z" fill={W} stroke="none" /></S></button>
      </div>
      <div className="flex min-w-0 flex-1 flex-col border-l border-[#262d38]">
        <div className="flex flex-1 flex-col justify-end bg-[#c6c6c6] pb-[3px] pl-[2px] text-[13px] leading-[15px] text-black">
          {log.map((l, i) => (
            <p key={i} className="h-[15px] whitespace-pre">
              {l.split(/([ -~]+)/).map((s, j) => j % 2 ? <span key={j} className="font-['Liberation_Mono',monospace] text-[11px]">{s}</span> : s)}
            </p>
          ))}
        </div>
        <div className="flex h-[21px] items-center gap-[3px] border-t border-[#222933] bg-white pl-[4px]">
          <S w={16} h={12}><path d="M.5 .5h15v11H.5z" fill="#f4f4f4" stroke="#555" /><path d="M0 1.500h16" stroke="#555" strokeWidth="2" /><path d="M2.500 4l3 2-3 2M7 8.500h4" stroke="#555" /></S>
          <S w={8} h={4}><path d="M0 0h8L4 4z" fill="#555" stroke="none" /></S>
          <input aria-label="键入命令" placeholder="键入命令" className="ml-[4px] h-full flex-1 pb-px text-[13px] italic outline-none placeholder:text-[#777]" />
        </div>
      </div>
    </div>
  );
}

function St({ cls = "", on, label, children }: { cls?: string; on?: boolean; label: string } & Kids) {
  return <button type="button" aria-label={label} className={`flex h-[22px] items-center justify-center ${on ? "bg-[#6392c8]" : "bg-[#3b4453]"} ${cls}`}>{children}</button>;
}
const Person = ({ x = 0, children }: { x?: number } & Kids) => <S><path transform={`translate(${x},0)`} d="M7 0l2.500 6 0 3 5 6-5.500-2-2 3-2-3-5.500 2 5-6 0-3z" fill={W} stroke="none" />{children}</S>;

function StatusBar() {
  return (
    <footer className="relative flex h-[28px] shrink-0 items-start bg-[#222933] text-[#e4e4e4]">
      <nav className="flex h-[24px] flex-1 items-center pl-[16px]">
        <button type="button" aria-label="布局菜单"><Burger /></button>
        <button type="button" className="ml-[9px] flex h-[24px] w-[58px] items-center justify-center bg-[#3b4453] font-bold text-white [clip-path:polygon(17%_0,100%_0,83%_100%,0_100%)]">模型</button>
        <button type="button" className="mr-[8px] ml-[7px]">布局1</button><Slash />
        <button type="button" className="mr-[8px] ml-[8px]">布局2</button><Slash />
        <button type="button" aria-label="新建布局" className="mx-[10px]"><Plus /></button><Slash />
      </nav>
      <div className="mt-[2px] flex gap-[2px]">
        <St label="模型" cls="w-[27px] text-white">模型</St>
        <St label="栅格" on cls="ml-px w-[22px]"><S><path d="M4 0v16M8 0v16M12 0v16M0 4h16M0 8h16M0 12h16" stroke="#fff" /></S></St>
        <St label="捕捉" cls="w-[39px] gap-[9px]"><S w={14}>{[1, 6, 11].flatMap((y) => [0, 5, 10].map((x) => <rect key={`${x}-${y}`} x={x} y={y} width="2" height="2" fill={W} stroke="none" />))}</S><BigArrow /></St>
        <St label="正交" cls="w-[24px]"><S><path d="M1.500 1v13.500H16M1 9.500h5V15" /></S></St>
        <St label="极轴追踪" cls="w-[38px] gap-[8px]"><S><circle cx="7" cy="8" r="6" /><path d="M7 8h9M7 8l6-7" strokeWidth="1.300" /></S><BigArrow /></St>
        <St label="等轴测草图" cls="w-[39px] gap-[9px]"><S><path d="M1 1l13 13" stroke={R} /><path d="M8 0v16" stroke={G} strokeWidth="2" /><rect x="6.500" y="6.500" width="3" height="3" fill={P} /></S><BigArrow /></St>
        <St label="对象捕捉追踪" on cls="w-[22px]"><S><path d="M13 2L2 14h14" stroke="#fff" strokeWidth="1.300" /><circle cx="8" cy="8" r="1.500" fill="#fff" /></S></St>
        <St label="对象捕捉" on cls="w-[22px]"><S><path d="M6 3.500h9v11H3.500V7M.5 .5h4v4h-4z" stroke="#fff" strokeWidth="1.300" /></S></St>
        <St label="捕捉设置" cls="w-[14px]"><BigArrow /></St>
        <St label="线宽" cls="w-[24px]"><S><path d="M0 2h6M8 2h8M10 6.500h6M12 14h4" strokeWidth="1.300" /><path d="M0 6.500h9" strokeWidth="3" /><path d="M0 11h11" strokeWidth="2" /><path d="M0 14h11M12 10.500h4" strokeWidth="2" /></S></St>
        <St label="注释可见性" on cls="ml-px w-[22px]"><Person><circle cx="13" cy="4" r="2" stroke="#fff" /></Person></St>
        <St label="自动缩放" cls="w-[24px]"><Person><path d="M13 0l-3 5h3l-1 3 4-5h-3z" fill={W} stroke="none" /></Person></St>
        <St label="注释比例" cls="w-[56px] gap-[5px]"><Person x={1} /><span className="text-xs">1:1</span><BigArrow /></St>
        <St label="工作空间" cls="w-[40px] gap-[9px]"><S><circle cx="8" cy="8" r="4.500" strokeWidth="3" /><circle cx="8" cy="8" r="6.800" strokeWidth="2" strokeDasharray="3 2.340" /></S><BigArrow /></St>
        <St label="注释监视器" cls="w-[24px]"><S><path d="M8 0v16M0 8h16" strokeWidth="1.500" /></S></St>
        <St label="隔离对象" cls="w-[24px]"><S><path d="M3 1v5h2V1M9 1v5h3M8 8l-3 6h6z" /><circle cx="13" cy="5" r="2" /></S></St>
        <St label="硬件加速" cls="w-[30px]"><S w={20} h={16}><path d="M0 2h12v8H0z" fill={W} stroke="none" /><path d="M14 6l6 10H8z" fill="#f09a5b" stroke="none" /><path d="M14 9v3M14 13v1.500" stroke="#fff" /></S></St>
        <St label="全屏显示" cls="w-[23px]"><S><path d="M.5 2.500h15v11H.5zM3 8v3h3M13 8V5h-3" strokeWidth="1.300" /></S></St>
        <St label="自定义" cls="w-[24px]"><Burger h={16} /></St>
      </div>
      <span className="pointer-events-none absolute top-px right-[15px] text-[15px] leading-[18px] text-[#d8d8d8]/80 [text-shadow:1px_1px_1px_#000a]">CSDN @麒麟233</span>
    </footer>
  );
}

const drawTools = [ic.line, ic.xline, ic.pline, ic.polygon, ic.rect, ic.arc, ic.circle, ic.cloud, ic.spline, ic.ellipse, ic.earc, ic.insertS, ic.create, ic.point, ic.hatch, ic.gradient, ic.region, ic.table, ic.text, ic.addsel];
const modifyTools = [ic.erase, ic.copy, ic.mirror, ic.offset, ic.array, ic.move, ic.rotate, ic.scale, ic.stretch, ic.trim, ic.extend, ic.breakPt, ic.brk, ic.join, ic.chamfer, ic.fillet, ic.blend, ic.explode];

export default function App() {
  return (
    <div className="relative flex h-screen flex-col overflow-hidden bg-[#222933] font-['Noto_Sans','Noto_Sans_CJK_SC',sans-serif] text-xs leading-4">
      <TitleBar />
      <div className="flex h-[20px] shrink-0 items-center justify-between pr-[8px] pl-[14px] text-[#a9adb3]">
        <nav className="flex gap-[25px] pt-px">{menus.map((m) => <button type="button" key={m}>{m}</button>)}</nav>
        <WinButtons cls="gap-[22px]" />
      </div>
      <div className="flex h-[33px] shrink-0 bg-[#3b4453]">
        <div className="mt-px flex items-center border-2 border-l border-white bg-[#222933] pr-[9px] pl-[3px] text-[#f2f2f2]">
          <S w={7} h={26}><path d="M.5 .5h2v25h-2zM4.500 .5h2v25h-2z" stroke="#b8bcc2" /></S>
          <S><path d="M0 0h16v16H0z" fill="#fff" stroke="none" /><path d="M4 4l5-3v2c3 1 5 4 3 8-2 3-7 3-8 0 2 1 5 1 6-2 0-2-1-3-3-3l1 2z" fill="#2f9a3a" stroke="none" /><path d="M3 9l3 4M9 8l-3 3" stroke="#145c1d" /></S>
          <nav className="ml-[10px] flex gap-[11px]">
            {plug.map((m) => <button type="button" key={m}>{m.slice(0, 2)}(<u>{m[2]}</u>)</button>)}
          </nav>
        </div>
      </div>
      <nav className="flex h-[24px] shrink-0 items-end pl-[4px] text-[#b4b8be]">
        <button type="button" className="h-[20px] bg-[#3b4453] px-[9px] pt-px text-white">默认</button>
        <div className="ml-[11px] flex h-[20px] items-center gap-[20px] pt-px">
          {["插入", "注释", "参数化", "视图", "管理", "输出"].map((t) => <button type="button" key={t}>{t}</button>)}
          <button type="button" aria-label="最小化功能区" className="ml-[11px] flex items-center gap-[4px]">
            <S w={15} h={8}><path d="M0 0h15v8H0z" fill="#fff" stroke="none" /><path d="M5 6l2.500-3L10 6z" fill="#444" stroke="none" /></S><Arrow />
          </button>
        </div>
      </nav>
      <Ribbon />
      <nav className="flex h-[27px] shrink-0 items-end pl-[16px] text-[#e4e4e4]">
        <div className="flex h-[24px] items-center">
          <button type="button" aria-label="文件选项卡菜单"><Burger /></button>
          <span className="mx-[9px]"><Slash /></span>
          <button type="button">开始</button>
          <button type="button" className="ml-[8px] flex h-[24px] w-[110px] items-center bg-[#3b4453] pl-[16px] font-bold text-white [clip-path:polygon(9%_0,100%_0,91%_100%,0_100%)]">
            <span className="flex-1 text-left">Drawing1*</span>
            <span className="mr-[12px]"><S w={8} h={8}><path d="M0 0l8 8M8 0L0 8" strokeWidth="1.500" /></S></span>
          </button>
          <button type="button" aria-label="新图形" className="mr-[10px] ml-[9px]"><Plus /></button>
          <Slash />
        </div>
      </nav>
      <main className="flex min-h-0 flex-1 border-t-4 border-b-4 border-[#3b4453] bg-[#3b4453]">
        <Palette />
        <div className="flex min-w-0 flex-1 flex-col">
          <div className="flex min-h-0 flex-1 gap-[4px]">
            <ToolStrip icons={drawTools} label="绘图" />
            <Canvas />
            <ToolStrip icons={modifyTools} label="修改" />
          </div>
          <CommandLine />
        </div>
      </main>
      <StatusBar />
      <svg width="1120" height="1000" viewBox="0 0 1120 1000" className="pointer-events-none absolute top-0 left-0" fill="none" stroke="#c00250" strokeWidth="15" strokeLinecap="round" strokeLinejoin="round" aria-hidden="true">
        <path d="M1080 457L203 958M220 896L203 958L264 975" />
      </svg>
    </div>
  );
}
